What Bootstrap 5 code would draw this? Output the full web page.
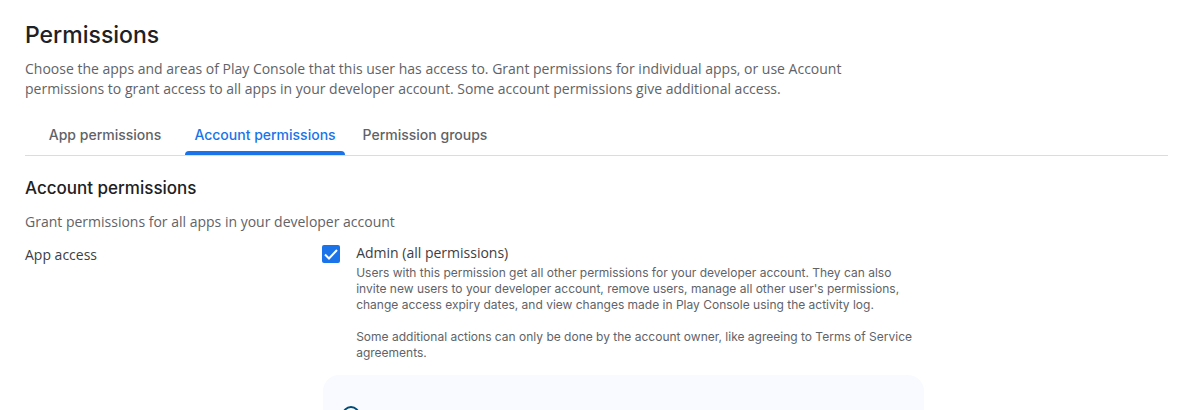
<!DOCTYPE html>
<html lang="en">
<head>
<meta charset="utf-8">
<meta name="viewport" content="width=device-width, initial-scale=1">
<title>Permissions</title>
<link href="https://cdn.jsdelivr.net/npm/bootstrap@5.3.0/dist/css/bootstrap.min.css" rel="stylesheet">
<style>
  body { font-family: "Open Sans", "Noto Sans", sans-serif; font-size: 14px; line-height: 20px; color: #5f6368; }
  .page { padding: 20px 30px 0 25px; }
  .page-title { font-family: Inter, sans-serif; font-size: 23px; line-height: 30px; font-weight: 500; color: #202124; margin-bottom: 9px; }
  .intro { max-width: 840px; margin-bottom: 16px; }
  .perm-tabs { border-bottom: 1px solid #dadce0; }
  .perm-tabs .nav-link { font-family: Inter, sans-serif; width: 160px; height: 40px; padding: 10px 0; border: 0; border-radius: 0; color: #5f6368; font-weight: 500; line-height: 20px; text-align: center; background: none; position: relative; }
  .perm-tabs .nav-link.active { color: #1a73e8; }
  .perm-tabs .nav-link.active::after { content: ""; position: absolute; left: 0; right: 0; bottom: 0; height: 4px; border-radius: 4px 4px 0 0; background: #1a73e8; }
  .section-title { font-family: Inter, sans-serif; font-size: 17px; line-height: 24px; font-weight: 500; color: #202124; margin: 20px 0 12px; }
  .section-intro { margin-bottom: 11px; }
  .dark-label { color: #3c4043; }
  .label-col { flex: 0 0 26%; padding-top: 2px; }
  .option-col { max-width: 602px; }
  .perm-check.form-check-input { width: 18px; height: 18px; margin: 2px 16px 0 0; border: 0; border-radius: 2px; background-size: 18px 18px; }
  .perm-check.form-check-input:checked { background-color: #1a73e8; background-image: url("data:image/svg+xml,%3Csvg xmlns='http://www.w3.org/2000/svg' viewBox='0 0 18 18'%3E%3Cpath fill='none' stroke='%23fff' stroke-width='2' d='M3 9.500l4 4 8-8.500'/%3E%3C/svg%3E"); }
  .hint { font-family: Inter, sans-serif; font-size: 12px; line-height: 16px; max-width: 568px; margin-top: 2px; }
  .hint p { margin-bottom: 16px; }
  .tip { border-radius: 16px; background: #f8faff; padding: 29px 17px; margin: -2px 0 0 1px; }
</style>
</head>
<body class="vh-100 overflow-hidden">
<main class="page h-100 overflow-hidden">
  <h1 class="page-title">Permissions</h1>
  <p class="intro">Choose the apps and areas of Play Console that this user has access to. Grant permissions for individual apps, or use Account permissions to grant access to all apps in your developer account. Some account permissions give additional access.</p>

  <ul class="nav perm-tabs" role="tablist">
    <li class="nav-item" role="presentation"><button type="button" class="nav-link" role="tab" aria-selected="false">App permissions</button></li>
    <li class="nav-item" role="presentation"><button type="button" class="nav-link active" role="tab" aria-selected="true">Account permissions</button></li>
    <li class="nav-item" role="presentation"><button type="button" class="nav-link" role="tab" aria-selected="false">Permission groups</button></li>
  </ul>

  <h2 class="section-title">Account permissions</h2>
  <p class="section-intro">Grant permissions for all apps in your developer account</p>

  <div class="d-flex">
    <div class="label-col dark-label">App access</div>
    <div class="option-col flex-grow-1">
      <div class="d-flex">
        <input class="form-check-input perm-check flex-shrink-0" type="checkbox" id="admin" checked>
        <div>
          <label class="dark-label d-block" for="admin">Admin (all permissions)</label>
          <div class="hint">
            <p>Users with this permission get all other permissions for your developer account. They can also invite new users to your developer account, remove users, manage all other user's permissions, change access expiry dates, and view changes made in Play Console using the activity log.</p>
            <p>Some additional actions can only be done by the account owner, like agreeing to Terms of Service agreements.</p>
          </div>
        </div>
      </div>
      <div class="tip">
        <svg class="d-block" width="24" height="24" viewBox="0 0 24 24" fill="none" stroke="#004a77" stroke-width="2" aria-hidden="true">
          <circle cx="11" cy="11" r="8"/>
          <path d="M11 10v5M11 6v2"/>
        </svg>
      </div>
    </div>
  </div>
</main>
<script src="https://cdn.jsdelivr.net/npm/bootstrap@5.3.0/dist/js/bootstrap.bundle.min.js"></script>
</body>
</html>
